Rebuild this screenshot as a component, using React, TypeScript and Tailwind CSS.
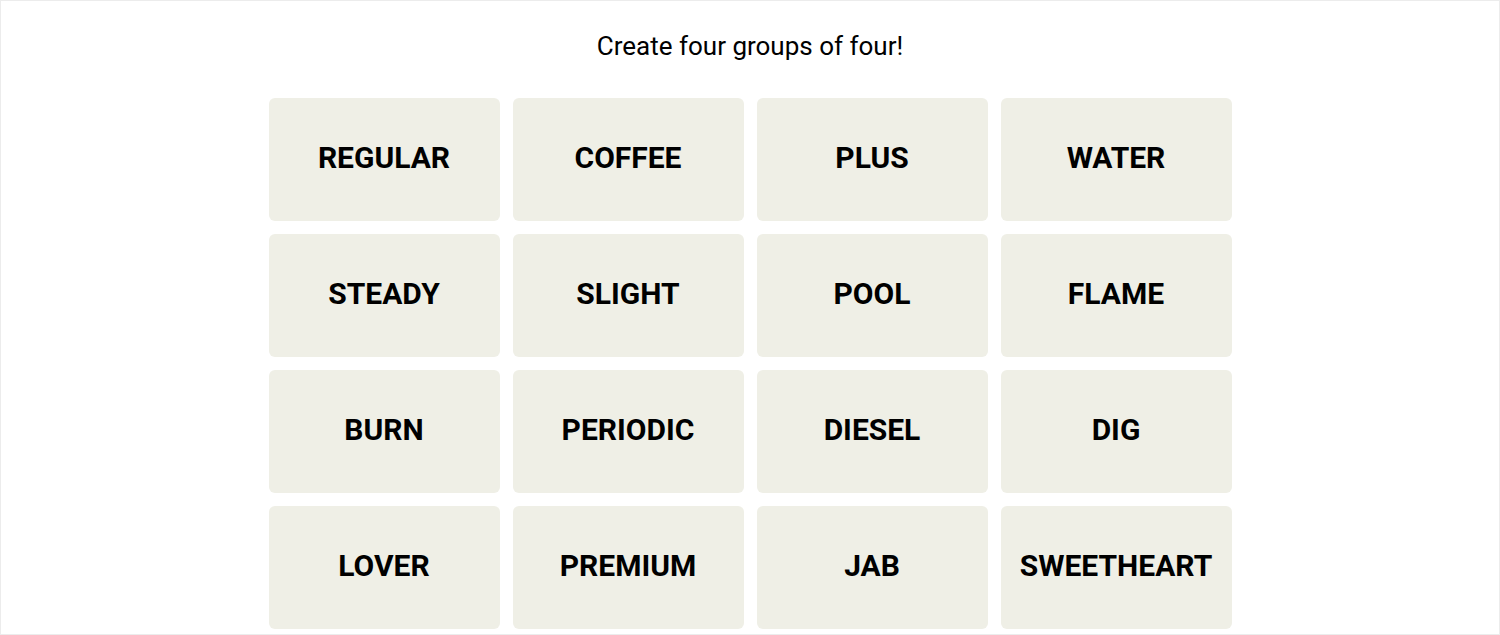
const WORDS = [
  "REGULAR",
  "COFFEE",
  "PLUS",
  "WATER",
  "STEADY",
  "SLIGHT",
  "POOL",
  "FLAME",
  "BURN",
  "PERIODIC",
  "DIESEL",
  "DIG",
  "LOVER",
  "PREMIUM",
  "JAB",
  "SWEETHEART",
];

export default function App() {
  return (
    <div className="box-border h-[635px] overflow-hidden border border-[#ececec] bg-white font-['Roboto',sans-serif] text-black">
      <p className="pt-[30px] text-center text-[26px] leading-[30px]">
        Create four groups of four!
      </p>

      <div className="mx-auto mt-[37px] grid w-[963px] grid-cols-4 gap-[13px]">
        {WORDS.map((word) => (
          <button
            key={word}
            className="flex h-[123px] items-center justify-center rounded-[6px] bg-[#efefe6] pb-[4px] text-[30px] font-bold uppercase leading-none text-black"
          >
            {word}
          </button>
        ))}
      </div>
    </div>
  );
}
